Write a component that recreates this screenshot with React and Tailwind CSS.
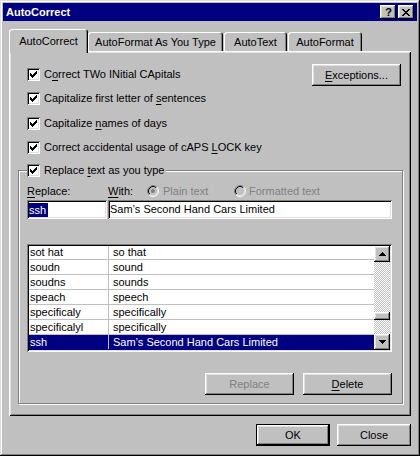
import React from "react";

const raised =
  "shadow-[inset_-1px_-1px_#000,inset_1px_1px_#fff,inset_-2px_-2px_#808080,inset_2px_2px_#dfdfdf]";
const sunken =
  "shadow-[inset_1px_1px_#808080,inset_-1px_-1px_#fff,inset_2px_2px_#000,inset_-2px_-2px_#dfdfdf]";

function CheckMark() {
  const px = [
    [9, 3, 1],
    [8, 4, 2],
    [3, 5, 1],
    [7, 5, 3],
    [3, 6, 2],
    [6, 6, 3],
    [3, 7, 5],
    [4, 8, 3],
    [5, 9, 1],
  ];
  return (
    <svg width="13" height="13" viewBox="0 0 13 13" shapeRendering="crispEdges" className="block">
      {px.map(([x, y, w], i) => (
        <rect key={i} x={x} y={y} width={w} height="1" fill="#000" />
      ))}
    </svg>
  );
}

function Checkbox() {
  return (
    <span className={`block w-[13px] h-[13px] shrink-0 bg-white ${sunken}`}>
      <CheckMark />
    </span>
  );
}

function CheckRow({ children, className = "" }) {
  return (
    <div className={`flex items-center gap-[4px] h-[13px] ${className}`}>
      <Checkbox />
      <span className="whitespace-nowrap">{children}</span>
    </div>
  );
}

function U({ children }) {
  return <span className="underline decoration-1 underline-offset-[2px]">{children}</span>;
}

function Radio({ dot }) {
  return (
    <svg width="12" height="12" viewBox="0 0 12 12" className="block shrink-0">
      <circle cx="6" cy="6" r="5" fill="#c0c0c0" />
      <path d="M2.11 9.89 A5.5 5.5 0 0 1 9.89 2.11" stroke="#808080" fill="none" />
      <path d="M9.89 2.11 A5.5 5.5 0 0 1 2.11 9.89" stroke="#fff" fill="none" />
      <path d="M2.82 9.18 A4.5 4.5 0 0 1 9.18 2.82" stroke="#000" fill="none" />
      <path d="M9.18 2.82 A4.5 4.5 0 0 1 2.82 9.18" stroke="#dfdfdf" fill="none" />
      {dot && <circle cx="6" cy="6" r="2" fill="#808080" />}
    </svg>
  );
}

function XGlyph() {
  const rows = [
    [0, 1, 6, 7],
    [1, 2, 5, 6],
    [2, 3, 4, 5],
    [3, 4],
    [2, 3, 4, 5],
    [1, 2, 5, 6],
    [0, 1, 6, 7],
  ];
  return (
    <svg width="8" height="7" viewBox="0 0 8 7" shapeRendering="crispEdges" className="block">
      {rows.flatMap((cols, y) =>
        cols.map((x) => <rect key={`${y}-${x}`} x={x} y={y} width="1" height="1" fill="#000" />)
      )}
    </svg>
  );
}

function Triangle({ down }) {
  const widths = [1, 3, 5, 7];
  const ordered = down ? [...widths].reverse() : widths;
  return (
    <svg width="7" height="4" viewBox="0 0 7 4" shapeRendering="crispEdges" className="block">
      {ordered.map((w, y) => (
        <rect key={y} x={(7 - w) / 2} y={y} width={w} height="1" fill="#000" />
      ))}
    </svg>
  );
}

function Button({ children, className = "", disabled = false }) {
  return (
    <div
      className={`flex items-center justify-center bg-[#c0c0c0] ${raised} ${
        disabled ? "text-[#808080]" : ""
      } ${className}`}
    >
      {children}
    </div>
  );
}

const rows = [
  ["sot hat", "so that"],
  ["soudn", "sound"],
  ["soudns", "sounds"],
  ["speach", "speech"],
  ["specificaly", "specifically"],
  ["specificalyl", "specifically"],
  ["ssh", "Sam\u2019s Second Hand Cars Limited", true],
];

export default function App() {
  return (
    <div className="w-[420px] h-[456px] bg-[#c0c0c0] p-[3px] flex flex-col font-[family-name:'Liberation_Sans',Arial,sans-serif] text-[11px] leading-[13px] text-black select-none shadow-[inset_-1px_-1px_#000,inset_1px_1px_#dfdfdf,inset_-2px_-2px_#808080,inset_2px_2px_#fff]">
      {/* Title bar */}
      <div className="h-[18px] shrink-0 bg-[#000080] flex items-center justify-between pl-[3px] pr-[3px]">
        <span className="text-white font-bold">AutoCorrect</span>
        <div className="flex gap-[2px]">
          <div className={`w-[16px] h-[14px] bg-[#c0c0c0] flex items-center justify-center ${raised}`}>
            <span className="font-bold text-[11px] leading-none pl-[1px]">?</span>
          </div>
          <div className={`w-[16px] h-[14px] bg-[#c0c0c0] flex items-center justify-center ${raised}`}>
            <XGlyph />
          </div>
        </div>
      </div>

      {/* Body */}
      <div className="flex-1 flex flex-col px-[6px] pt-[8px]">
        {/* Tabs */}
        <div className="flex items-end h-[22px] relative z-10">
          <div className="w-[79px] h-[24px] -mb-[2px] bg-[#c0c0c0] rounded-t-[3px] flex justify-center pt-[6px] shadow-[inset_1px_1px_#fff,inset_-1px_0_#000,inset_-2px_0_#808080]">
            AutoCorrect
          </div>
          <div className="w-[135px] h-[19px] bg-[#c0c0c0] rounded-t-[3px] flex justify-center pt-[4px] shadow-[inset_1px_1px_#fff,inset_-1px_0_#000,inset_-2px_0_#808080]">
            AutoFormat As You Type
          </div>
          <div className="w-[63px] ml-[1px] h-[19px] bg-[#c0c0c0] rounded-t-[3px] flex justify-center pt-[4px] shadow-[inset_1px_1px_#fff,inset_-1px_0_#000,inset_-2px_0_#808080]">
            AutoText
          </div>
          <div className="w-[74px] ml-[1px] h-[19px] bg-[#c0c0c0] rounded-t-[3px] flex justify-center pt-[4px] shadow-[inset_1px_1px_#fff,inset_-1px_0_#000,inset_-2px_0_#808080]">
            AutoFormat
          </div>
        </div>

        {/* Panel */}
        <div className="h-[365px] shrink-0 flex flex-col pl-[9px] pr-[8px] pt-[13px] shadow-[inset_1px_1px_#fff,inset_-1px_-1px_#000,inset_2px_2px_#dfdfdf,inset_-2px_-2px_#808080]">
          <div className="flex justify-between">
            <div className="flex flex-col pl-[9px] pt-[4px]">
              <CheckRow>
                C<U>o</U>rrect TWo INitial CApitals
              </CheckRow>
              <CheckRow className="mt-[11px]">
                Capitalize first letter of <U>s</U>entences
              </CheckRow>
              <CheckRow className="mt-[12px]">
                Capitalize <U>n</U>ames of days
              </CheckRow>
              <CheckRow className="mt-[11px]">
                Correct accidental usage of cAPS <U>L</U>OCK key
              </CheckRow>
            </div>
            <Button className="w-[89px] h-[22px] mr-[2px]">
              <span>
                <U>E</U>xceptions...
              </span>
            </Button>
          </div>

          {/* Group box */}
          <div className="relative mt-[16px] h-[234px] border border-[#808080] shadow-[inset_1px_1px_#fff,1px_1px_#fff] flex flex-col pl-[8px] pr-[10px] pt-[14px]">
            <div className="absolute left-[8px] -top-[7px] bg-[#c0c0c0] pr-[2px] flex items-center gap-[4px] h-[13px]">
              <Checkbox />
              <span className="whitespace-nowrap">
                Replace <U>t</U>ext as you type
              </span>
            </div>

            {/* labels */}
            <div className="flex items-start h-[13px]">
              <span className="w-[81px]">
                <U>R</U>eplace:
              </span>
              <span className="w-[39px]">
                <U>W</U>ith:
              </span>
              <div className="w-[87px] flex items-start gap-[4px] text-[#808080]">
                <Radio dot />
                <span>Plain text</span>
              </div>
              <div className="flex items-start gap-[3px] text-[#808080]">
                <Radio />
                <span>Formatted text</span>
              </div>
            </div>

            {/* inputs */}
            <div className="flex gap-[1px] mt-[2px] h-[19px]">
              <div className={`w-[80px] bg-white p-[2px] flex items-center ${sunken}`}>
                <span className="inline-block h-[14px] leading-[14px] bg-[#000080] text-white pr-[2px]">
                  ssh
                </span>
              </div>
              <div className={`flex-1 bg-white p-[2px] flex items-center whitespace-nowrap ${sunken}`}>
                Sam’s Second Hand Cars Limited
              </div>
            </div>

            {/* list */}
            <div className={`mt-[25px] h-[108px] bg-white p-[2px] flex ${sunken}`}>
              <div className="flex-1 overflow-hidden">
                <div className="-mt-[1px]">
                  {rows.map(([a, b, sel]) => (
                    <div
                      key={a}
                      className={`h-[15px] flex border-b ${
                        sel ? "bg-[#000080] text-white border-[#000080]" : "border-[#c0c0c0]"
                      }`}
                    >
                      <div className="w-[80px] shrink-0 border-r border-[#c0c0c0] pl-[1px] pt-[1px] whitespace-nowrap">
                        {a}
                      </div>
                      <div className="pl-[4px] pt-[1px] whitespace-nowrap">{b}</div>
                    </div>
                  ))}
                </div>
              </div>
              <div className="w-[16px] shrink-0 flex flex-col">
                <div className={`h-[16px] bg-[#c0c0c0] flex items-center justify-center ${raised}`}>
                  <Triangle />
                </div>
                <div className="flex-1 bg-[image:repeating-conic-gradient(#c0c0c0_0%_25%,#fff_0%_50%)] bg-[length:2px_2px]">
                  <div className={`mt-[50px] h-[8px] bg-[#c0c0c0] ${raised}`} />
                </div>
                <div className={`h-[16px] bg-[#c0c0c0] flex items-center justify-center ${raised}`}>
                  <Triangle down />
                </div>
              </div>
            </div>

            {/* buttons */}
            <div className="flex justify-end gap-[9px] mt-[21px]">
              <Button className="w-[89px] h-[22px]" disabled>
                Replace
              </Button>
              <Button className="w-[89px] h-[22px]">
                <span>
                  <U>D</U>elete
                </span>
              </Button>
            </div>
          </div>
        </div>

        {/* Dialog buttons */}
        <div className="flex justify-end gap-[7px] mt-[8px]">
          <div className="w-[74px] h-[22px] border border-black flex">
            <Button className="flex-1">OK</Button>
          </div>
          <Button className="w-[74px] h-[22px]">Close</Button>
        </div>
      </div>
    </div>
  );
}
